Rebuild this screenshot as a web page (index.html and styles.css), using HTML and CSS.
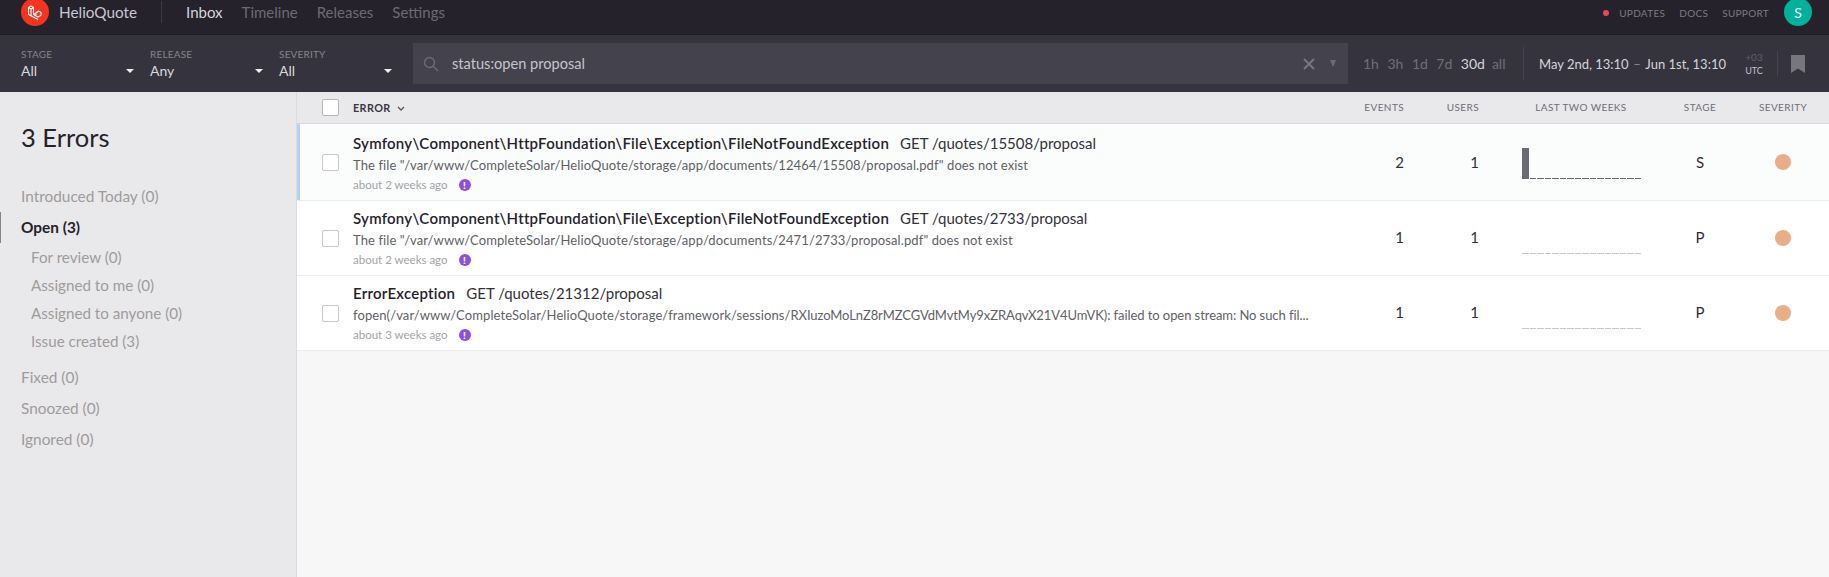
FILE: index.html
```html
<!DOCTYPE html>
<html>

<head>
    <meta charset="utf-8">
    <meta name="viewport" content="width=device-width">
    <title>HelioQuote Inbox</title>
    <link rel="stylesheet" href="styles.css">
</head>

<body>
    <div class="nav">
        <div class="logo">
            <svg width="16" height="16" viewBox="0 0 16 16" fill="none" stroke="#fff" stroke-width="1.1" stroke-linejoin="round">
                <path d="M1.500 3.500 4 2l2.500 1.500v7L11 13l3-1.700V8.500L11.500 7 9 8.500v2.600M6.500 10.500l4.500-2.600M1.500 3.500v7L11 15.500"/>
                <path d="M1.500 3.500 4 5l2.500-1.500M4 5v7"/>
            </svg>
        </div>
        <span class="project">HelioQuote</span>
        <span class="nav-divider"></span>
        <a class="nav-link active">Inbox</a>
        <a class="nav-link">Timeline</a>
        <a class="nav-link">Releases</a>
        <a class="nav-link">Settings</a>
        <div class="nav-right">
            <span class="red-dot"></span>
            <a class="nav-small">UPDATES</a>
            <a class="nav-small">DOCS</a>
            <a class="nav-small">SUPPORT</a>
            <div class="avatar">S</div>
        </div>
    </div>

    <div class="filters">
        <div class="select">
            <div class="select-label">STAGE</div>
            <div class="select-value">All<span class="caret"></span></div>
        </div>
        <div class="select">
            <div class="select-label">RELEASE</div>
            <div class="select-value">Any<span class="caret"></span></div>
        </div>
        <div class="select">
            <div class="select-label">SEVERITY</div>
            <div class="select-value">All<span class="caret"></span></div>
        </div>
        <div class="search">
            <svg class="search-icon" width="16" height="16" viewBox="0 0 16 16" fill="none" stroke="#6c6b74" stroke-width="1.4">
                <circle cx="6.500" cy="6.500" r="5"/>
                <path d="M10.200 10.200 15 15"/>
            </svg>
            <span class="search-text">status:open proposal</span>
            <svg class="search-x" width="12" height="12" viewBox="0 0 12 12" stroke="#77767e" stroke-width="2">
                <path d="M1 1l10 10M11 1 1 11"/>
            </svg>
            <span class="search-arrow"></span>
        </div>
        <div class="times">
            <a>1h</a><a>3h</a><a>1d</a><a>7d</a><a class="on">30d</a><a>all</a>
        </div>
        <div class="dates">
            <span>May 2nd, 13:10</span>
            <span class="dash">–</span>
            <span>Jun 1st, 13:10</span>
        </div>
        <div class="tz">
            <div class="tz-off">+03</div>
            <div class="tz-utc">UTC</div>
        </div>
        <div class="bookmark-wrap">
            <svg width="14" height="18" viewBox="0 0 14 18" fill="#77767e">
                <path d="M0 0h14v18L7 13.500 0 18z"/>
            </svg>
        </div>
    </div>

    <div class="content">
        <div class="sidebar">
            <h2 class="side-title">3 Errors</h2>
            <a class="side-item first">Introduced Today (0)</a>
            <a class="side-item open">Open (3)</a>
            <a class="side-sub">For review (0)</a>
            <a class="side-sub">Assigned to me (0)</a>
            <a class="side-sub">Assigned to anyone (0)</a>
            <a class="side-sub">Issue created (3)</a>
            <a class="side-item after-sub">Fixed (0)</a>
            <a class="side-item">Snoozed (0)</a>
            <a class="side-item">Ignored (0)</a>
        </div>

        <div class="main">
            <div class="row head">
                <div class="cell-check"><span class="check head-check"></span></div>
                <div class="cell-main head-error">ERROR
                    <svg width="8" height="6" viewBox="0 0 8 6" fill="none" stroke="#55545c" stroke-width="1.300">
                        <path d="M1 1l3 3 3-3"/>
                    </svg>
                </div>
                <div class="cell-events">EVENTS</div>
                <div class="cell-users">USERS</div>
                <div class="cell-chart">LAST TWO WEEKS</div>
                <div class="cell-stage">STAGE</div>
                <div class="cell-sev">SEVERITY</div>
            </div>

            <div class="row issue seen">
                <div class="cell-check"><span class="check"></span></div>
                <div class="cell-main">
                    <div class="title"><b>Symfony\Component\HttpFoundation\File\Exception\FileNotFoundException</b><span>GET /quotes/15508/proposal</span></div>
                    <div class="msg">The file "/var/www/CompleteSolar/HelioQuote/storage/app/documents/12464/15508/proposal.pdf" does not exist</div>
                    <div class="meta">about 2 weeks ago<span class="mark">!</span></div>
                </div>
                <div class="cell-events">2</div>
                <div class="cell-users">1</div>
                <div class="cell-chart">
                    <div class="spark dark">
                        <i class="tall"></i><i></i><i></i><i></i><i></i><i></i><i></i><i></i><i></i><i></i><i></i><i></i><i></i><i></i><i></i><i></i>
                    </div>
                </div>
                <div class="cell-stage">S</div>
                <div class="cell-sev"><span class="dot"></span></div>
            </div>

            <div class="row issue">
                <div class="cell-check"><span class="check"></span></div>
                <div class="cell-main">
                    <div class="title"><b>Symfony\Component\HttpFoundation\File\Exception\FileNotFoundException</b><span>GET /quotes/2733/proposal</span></div>
                    <div class="msg">The file "/var/www/CompleteSolar/HelioQuote/storage/app/documents/2471/2733/proposal.pdf" does not exist</div>
                    <div class="meta">about 2 weeks ago<span class="mark">!</span></div>
                </div>
                <div class="cell-events">1</div>
                <div class="cell-users">1</div>
                <div class="cell-chart">
                    <div class="spark">
                        <i></i><i></i><i></i><i></i><i></i><i></i><i></i><i></i><i></i><i></i><i></i><i></i><i></i><i></i><i></i><i></i>
                    </div>
                </div>
                <div class="cell-stage">P</div>
                <div class="cell-sev"><span class="dot"></span></div>
            </div>

            <div class="row issue">
                <div class="cell-check"><span class="check"></span></div>
                <div class="cell-main">
                    <div class="title"><b>ErrorException</b><span>GET /quotes/21312/proposal</span></div>
                    <div class="msg">fopen(/var/www/CompleteSolar/HelioQuote/storage/framework/sessions/<span class="tight">RXIuzoMoLnZ8rMZCGVdMvtMy9xZRAqvX21V4UmVK): failed to open stream: No such fil...</span></div>
                    <div class="meta">about 3 weeks ago<span class="mark">!</span></div>
                </div>
                <div class="cell-events">1</div>
                <div class="cell-users">1</div>
                <div class="cell-chart">
                    <div class="spark">
                        <i></i><i></i><i></i><i></i><i></i><i></i><i></i><i></i><i></i><i></i><i></i><i></i><i></i><i></i><i></i><i></i>
                    </div>
                </div>
                <div class="cell-stage">P</div>
                <div class="cell-sev"><span class="dot"></span></div>
            </div>
        </div>
    </div>
</body>

</html>
```

FILE: styles.css
```css
html, body {
    height: 100%;
}

body {
    margin: 0;
    overflow: hidden;
    display: flex;
    flex-direction: column;
    font-family: Lato, sans-serif;
    background: #f7f7f7;
    color: #2f2d36;
}

a {
    cursor: pointer;
}

/* top bar */
.nav {
    height: 35px;
    flex: none;
    box-sizing: border-box;
    display: flex;
    align-items: center;
    padding: 0 17px 10px 21px;
    background: #25222b;
    border-bottom: 1px solid #1e1c23;
}

.logo {
    width: 28px;
    height: 28px;
    flex: none;
    border-radius: 50%;
    background: #f5341f;
    display: flex;
    align-items: center;
    justify-content: center;
}

.project {
    margin-left: 10px;
    font-size: 15.300px;
    color: #c9c8ce;
}

.nav-divider {
    width: 1px;
    height: 22px;
    margin: 0 24px;
    background: #3a3841;
}

.nav-link {
    margin-right: 19px;
    font-size: 15px;
    color: #6c6a74;
}

.nav-link.active {
    color: #d5d4d9;
}

.nav-right {
    margin-left: auto;
    display: flex;
    align-items: center;
}

.red-dot {
    width: 6px;
    height: 6px;
    margin-top: 2px;
    margin-right: 10px;
    border-radius: 50%;
    background: #e8485a;
}

.nav-small {
    margin-right: 14px;
    padding-top: 2px;
    font-size: 10px;
    letter-spacing: 0.3px;
    color: #7c7a84;
}

.avatar {
    width: 28px;
    height: 28px;
    flex: none;
    border-radius: 50%;
    margin-left: 1px;
    background: #00b29c;
    color: #fff;
    font-size: 14px;
    display: flex;
    align-items: center;
    justify-content: center;
}

/* filter bar */
.filters {
    height: 57px;
    flex: none;
    box-sizing: border-box;
    display: flex;
    align-items: center;
    padding-left: 21px;
    background: #35343e;
}

.select {
    width: 129px;
    flex: none;
}

.select-label {
    font-size: 10px;
    letter-spacing: 0.2px;
    color: #85848c;
}

.select-value {
    position: relative;
    width: 113px;
    margin-top: 2px;
    font-size: 14px;
    color: #d9d8dc;
}

.caret {
    position: absolute;
    right: 0;
    top: 7px;
    border-left: 4.500px solid transparent;
    border-right: 4.500px solid transparent;
    border-top: 4px solid #f0f0f2;
}

.search {
    width: 935px;
    height: 41px;
    flex: none;
    margin-left: 5px;
    box-sizing: border-box;
    display: flex;
    align-items: center;
    background: #44424c;
    padding: 0 12px 0 10px;
}

.search-icon {
    flex: none;
}

.search-text {
    margin-left: 13px;
    font-size: 14.600px;
    color: #c6c5cb;
}

.search-x {
    margin-left: auto;
}

.search-arrow {
    margin-left: 15px;
    border-left: 3.500px solid transparent;
    border-right: 3.500px solid transparent;
    border-top: 7px solid #6c6b74;
}

.times {
    margin-left: 15px;
    width: 160px;
    height: 33px;
    flex: none;
    display: flex;
    align-items: center;
    border-right: 1px solid #45444d;
    font-size: 14px;
    color: #6f6e77;
}

.times a {
    margin-right: 8.500px;
}

.times .on {
    margin-right: 7px;
    color: #d5d4d9;
}

.dates {
    margin-left: 15px;
    width: 187px;
    flex: none;
    display: flex;
    justify-content: space-between;
    white-space: nowrap;
    font-size: 13px;
    color: #d5d4d9;
}

.dash {
    color: #8a8991;
}

.tz {
    width: 18px;
    margin-left: 19px;
    flex: none;
    text-align: center;
}

.tz-off {
    font-size: 10px;
    color: #5f5e67;
}

.tz-utc {
    margin-top: 2px;
    font-size: 9px;
    color: #c3c2c8;
}

.bookmark-wrap {
    margin-left: 14px;
    height: 25px;
    padding-left: 13px;
    display: flex;
    align-items: center;
    border-left: 1px solid #45444d;
}

/* body */
.content {
    flex: 1;
    display: flex;
    min-height: 0;
}

.sidebar {
    width: 297px;
    flex: none;
    box-sizing: border-box;
    padding: 0 0 0 21px;
    background: #e9e9eb;
    border-right: 1px solid #dcdcdf;
}

.side-title {
    margin: 28px 0 27px;
    font-size: 25.500px;
    line-height: 34px;
    font-weight: 400;
    color: #25222b;
}

.side-item {
    display: block;
    font-size: 15.400px;
    line-height: 31px;
    color: #a09b9b;
}

.side-item.open {
    position: relative;
    font-weight: 700;
    color: #25222b;
}

.side-item.open::before {
    content: "";
    position: absolute;
    left: -21px;
    top: 0;
    width: 1px;
    height: 31px;
    background: #85848c;
}

.side-sub {
    display: block;
    padding-left: 10px;
    font-size: 15.200px;
    line-height: 28px;
    color: #a09b9b;
}

.side-item.after-sub {
    margin-top: 7px;
}

.main {
    flex: 1;
    min-width: 0;
    display: flex;
    flex-direction: column;
}

/* table rows */
.row {
    display: grid;
    grid-template-columns: 56px 1fr 70px 75px 28px 162px 62px 98px;
    align-items: center;
}

.head {
    height: 32px;
    box-sizing: border-box;
    padding-bottom: 1px;
    background: #e9e9eb;
    border-bottom: 1px solid #d9d9dc;
    font-size: 10px;
    letter-spacing: 0.4px;
    color: #6f6e77;
}

.head .cell-main {
    font-size: 10.800px;
    font-weight: 700;
    color: #3a3841;
}

.head .cell-chart {
    padding-right: 14px;
    text-align: center;
}

.head-error svg {
    margin-left: 3px;
}

.issue {
    height: 75px;
    box-sizing: border-box;
    background: #fff;
    border-bottom: 1px solid #ececee;
    font-size: 15px;
}

.issue.seen {
    height: 77px;
    background: #fbfdfc;
    box-shadow: inset 3px 0 0 #b3d1f0;
}

.cell-check {
    padding-left: 25px;
    display: flex;
}

.check {
    width: 17px;
    height: 17px;
    box-sizing: border-box;
    border: 1px solid #c9c9cd;
    border-radius: 2px;
    background: #fff;
}

.head-check {
    border-color: #b5b5ba;
}

.cell-main {
    min-width: 0;
    padding-right: 17px;
}

.seen .cell-main {
    padding-top: 2px;
}

.title {
    font-size: 15px;
    line-height: 20px;
    color: #33313a;
    white-space: nowrap;
}

.title b {
    font-weight: 600;
    letter-spacing: 0.25px;
    margin-right: 11px;
    color: #25222b;
}

.msg {
    margin-top: 3px;
    font-size: 13px;
    letter-spacing: 0.1px;
    line-height: 18px;
    color: #625f66;
    white-space: nowrap;
}

.tight {
    letter-spacing: -0.07px;
}

.meta {
    margin-top: 2px;
    display: flex;
    align-items: center;
    font-size: 11.500px;
    line-height: 17px;
    color: #a3a3a8;
}

.mark {
    width: 12px;
    height: 12px;
    margin-left: 11px;
    border-radius: 50%;
    background: #8e4fdc;
    color: #fff;
    font-size: 10px;
    line-height: 12px;
    font-weight: 900;
    text-align: center;
}

.cell-events,
.cell-users {
    text-align: right;
}

.issue .cell-events,
.issue .cell-users,
.issue .cell-stage {
    padding-bottom: 2px;
}

.seen.issue .cell-events,
.seen.issue .cell-users,
.seen.issue .cell-stage {
    padding-bottom: 0;
}

.cell-chart {
    grid-column: 6;
}

.issue .cell-chart {
    height: 100%;
    box-sizing: border-box;
    padding: 0 28px 21px 15px;
    display: flex;
    align-items: flex-end;
}

.spark {
    width: 119px;
    height: 31px;
    display: grid;
    grid-template-columns: repeat(16, 1fr);
    column-gap: 1px;
    align-items: end;
}

.spark i {
    height: 1px;
    background: #c9c9cd;
}

.spark.dark i {
    background: #6c6b74;
}

.spark.dark .tall {
    height: 31px;
}

.cell-stage {
    text-align: center;
}

.cell-sev {
    padding-left: 6px;
    display: flex;
    justify-content: center;
}

.dot {
    width: 16px;
    height: 16px;
    margin-bottom: 1px;
    border-radius: 50%;
    background: #e8ae86;
}
```
